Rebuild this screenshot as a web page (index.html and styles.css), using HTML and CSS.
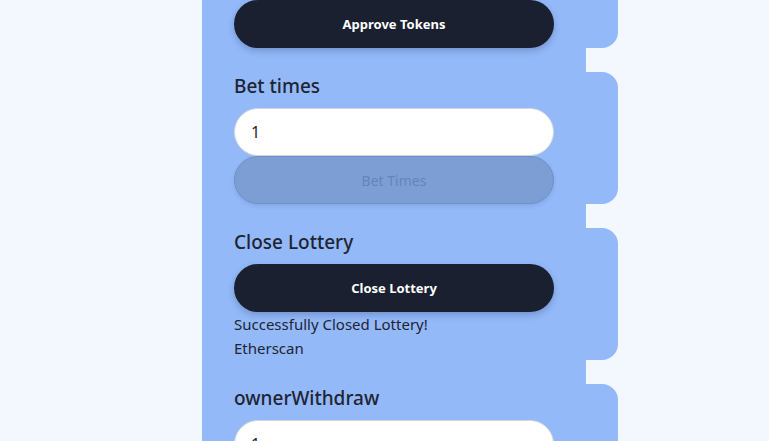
FILE: index.html
```html
<!DOCTYPE html>
<html>
<head>
<meta charset="utf-8">
<link rel="stylesheet" href="styles.css">
</head>
<body>
<div class="page">
  <div class="column">
    <section class="card card-first">
      <button class="btn btn-dark">Approve Tokens</button>
    </section>
    <section class="card">
      <h2 class="title">Bet times</h2>
      <input class="field" type="text" value="1">
      <button class="btn btn-disabled" disabled>Bet Times</button>
    </section>
    <section class="card">
      <h2 class="title">Close Lottery</h2>
      <button class="btn btn-dark">Close Lottery</button>
      <p class="msg">Successfully Closed Lottery!</p>
      <p class="msg">Etherscan</p>
    </section>
    <section class="card">
      <h2 class="title">ownerWithdraw</h2>
      <input class="field" type="text" value="1">
      <button class="btn btn-dark">Withdraw</button>
    </section>
  </div>
</div>
</body>
</html>
```
FILE: styles.css
```css
html, body {
  margin: 0;
  padding: 0;
  background: #f3f7fe;
  overflow: hidden;
  height: 441px;
}
body {
  font-family: "Segoe UI", "Noto Sans", "Open Sans", sans-serif;
  color: #1f2433;
}
.page {
  padding-left: 202px;
}
.column {
  width: 384px;
  background: #93b9f9;
  margin-top: -36px;
  display: flex;
  flex-direction: column;
  gap: 24px;
  padding-bottom: 200px;
}
.card {
  width: 416px;
  box-sizing: border-box;
  background: #93b9f9;
  border-radius: 16px;
  padding: 0 64px 0 32px;
  display: flex;
  flex-direction: column;
}
.card-first {
  padding-top: 36px;
}
.title {
  margin: 0 0 8px;
  font-size: 19px;
  line-height: 28px;
  font-weight: 500;
  color: #1f2433;
}
.field {
  box-sizing: border-box;
  height: 48px;
  width: 320px;
  border: 1px solid #d4d7dd;
  border-radius: 24px;
  background: #fff;
  padding: 0 16px;
  font-family: inherit;
  font-size: 16px;
  color: #1f2433;
  outline: none;
}
.btn {
  box-sizing: border-box;
  height: 48px;
  width: 320px;
  border-radius: 24px;
  font-family: inherit;
  font-size: 13px;
  cursor: pointer;
  box-shadow: 0 3px 6px rgba(30, 40, 70, 0.25);
}
.btn-dark {
  background: #1b2030;
  color: #fff;
  border: none;
  font-weight: 700;
}
.btn-disabled {
  background: #7d9ed4;
  color: #6684b8;
  border: 1px solid #7091c8;
  font-weight: 400;
  font-size: 14px;
  box-shadow: 0 2px 4px rgba(30, 40, 70, 0.12);
}
.msg {
  margin: 0;
  font-size: 15px;
  line-height: 24px;
  color: #1f2433;
}
```
